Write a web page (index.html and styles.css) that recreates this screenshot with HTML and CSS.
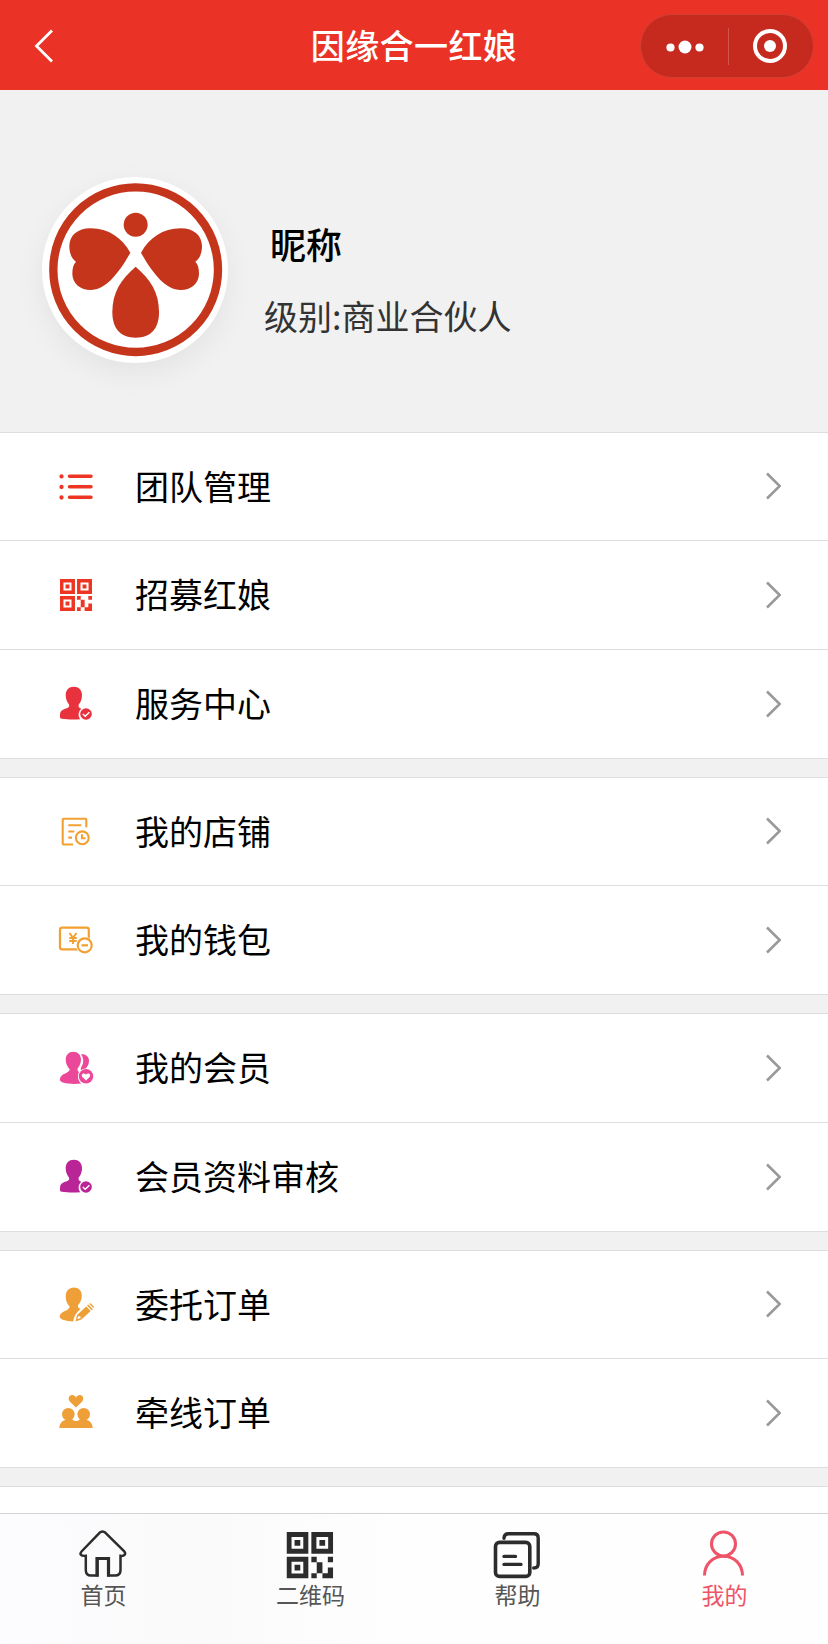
FILE: index.html
```html
<!DOCTYPE html>
<html lang="zh-CN">
<head>
    <meta charset="UTF-8">
    <meta name="viewport" content="width=device-width, initial-scale=1.0">
    <title>因缘合一红娘</title>
    <link rel="stylesheet" href="styles.css">
</head>
<body>
    <!-- shared icons -->
    <svg class="sprite" width="0" height="0">
        <symbol id="arrow" viewBox="0 0 16 28">
            <path d="M2 1.5 L14.7 14 L2 26.5" fill="none" stroke="#999" stroke-width="2.6"/>
        </symbol>
        <symbol id="qrcode" viewBox="0 0 139 139">
            <path fill="currentColor" fill-rule="evenodd" d="M0 0h65v65H0zM15 15v35h35V15zM24 24h17v17H24z
                M74 0h65v65H74zM89 15v35h35V15zM98 24h17v17H98z
                M0 74h65v65H0zM15 89v35h35V89zM24 98h17v17H24z"/>
            <path fill="currentColor" d="M74 74h16v16h-16zM123 74h16v16h-16zM90 90h17v33h-17zM123 106h16v33h-32v-16h16zM74 123h16v16h-16z"/>
        </symbol>
        <symbol id="user-check" viewBox="0 0 40 40">
            <path fill="currentColor" d="M17.8 2.7c5 0 8.2 3.3 8.2 8.3 0 4.2-1.3 7.2-3.3 9.500-.6 2.500.4 3.500 2.600 4.200-3.300 2.800-3.500 7.500-1 10.600-7 .4-14 .2-18.500-.6-1.900-.4-1.900-1-1.800-4 .2-3.300 1.500-4.500 4.500-5.600 4-1.400 5.200-1.900 4.500-4.600-2.100-2.500-3.300-5.500-3.300-9.500 0-5 3.200-8.300 8.100-8.300z"/>
            <circle cx="30" cy="30" r="5.8" fill="currentColor"/>
            <path d="M26.8 30l2.400 2.200 4.200-4" fill="none" stroke="#fff" stroke-width="1.5"/>
        </symbol>
    </svg>

    <header class="navbar">
        <svg class="back" viewBox="0 0 20 34"><path d="M19 1.5L3.5 17 19 32.500" fill="none" stroke="#fff" stroke-width="2.8"/></svg>
        <h1 class="navbar-title">因缘合一红娘</h1>
        <div class="capsule">
            <svg class="capsule-dots" viewBox="0 0 38 14">
                <circle cx="4.5" cy="7.5" r="4.1"/><circle cx="19" cy="7" r="6.5"/><circle cx="33.500" cy="7.5" r="4.1"/>
            </svg>
            <span class="capsule-line"></span>
            <svg class="capsule-close" viewBox="0 0 36 36">
                <circle cx="18" cy="18" r="15" fill="none" stroke="#fff" stroke-width="4"/><circle cx="18" cy="18" r="6"/>
            </svg>
        </div>
    </header>

    <section class="profile">
        <div class="avatar">
            <svg viewBox="0 0 558 558" fill="#c4351c">
                <circle cx="281" cy="278" r="247" fill="none" stroke="#c4351c" stroke-width="25"/>
                <circle cx="281" cy="143" r="36"/>
                <path id="petal" d="M265 227C240 183 200 154 146 154C106 154 82 176 82 208C82 230 90 246 102 254C94 262 91 274 91 290C91 320 116 339 146 339C190 339 230 290 265 227Z"/>
                <use href="#petal" transform="translate(562 0) scale(-1 1)"/>
                <path d="M281 269C238 306 211 345 211 405C211 455 235 482 281 482C327 482 351 455 351 405C351 345 324 306 281 269Z"/>
            </svg>
        </div>
        <div class="profile-info">
            <div class="nickname">昵称</div>
            <div class="level">级别:商业合伙人</div>
        </div>
    </section>

    <main class="menu">
        <div class="group">
            <a class="row">
                <svg class="icon red" viewBox="0 0 40 40" fill="none" stroke="currentColor" stroke-width="3.500" stroke-linecap="round">
                    <path d="M13.500 9.200H35M13.500 19.800H35M13.500 30.300H35"/>
                    <path stroke-width="4.300" d="M5.500 9.400h.01M5.500 20h.01M5.500 30.500h.01"/>
                </svg>
                <span class="label">团队管理</span>
                <svg class="arrow"><use href="#arrow"/></svg>
            </a>
            <a class="row">
                <svg class="icon red" viewBox="0 0 40 40"><use href="#qrcode" x="4" y="4" width="32" height="32"/></svg>
                <span class="label">招募红娘</span>
                <svg class="arrow"><use href="#arrow"/></svg>
            </a>
            <a class="row">
                <svg class="icon rose"><use href="#user-check"/></svg>
                <span class="label">服务中心</span>
                <svg class="arrow"><use href="#arrow"/></svg>
            </a>
        </div>

        <div class="group">
            <a class="row">
                <svg class="icon orange" viewBox="0 0 40 40" fill="none" stroke="currentColor" stroke-width="2.1">
                    <path d="M30.300 15.200V7.800Q30.300 6.800 29.300 6.800H7.700Q6.700 6.800 6.700 7.800V31.500Q6.700 32.500 7.700 32.500H17"/>
                    <path d="M12.300 13.200H25.300M12.300 19.500H18.300M12.300 25.600H16"/>
                    <circle cx="26.300" cy="25.800" r="6.400"/>
                    <path d="M26 22.300V26.300H29.500"/>
                </svg>
                <span class="label">我的店铺</span>
                <svg class="arrow"><use href="#arrow"/></svg>
            </a>
            <a class="row">
                <svg class="icon orange" viewBox="0 0 40 40" fill="none" stroke="currentColor" stroke-width="2.2">
                    <rect x="4" y="7.600" width="28.800" height="21.800" rx="2.200"/>
                    <path d="M13.500 13L17 17.800L20.500 13M13.300 18H20.700M13.300 21H20.700M17 17.800V24" stroke-width="1.900"/>
                    <circle cx="28.700" cy="25.300" r="8.600" fill="#fff" stroke="none"/>
                    <circle cx="28.700" cy="25.300" r="7"/>
                    <path d="M25.500 25.300H32"/>
                </svg>
                <span class="label">我的钱包</span>
                <svg class="arrow"><use href="#arrow"/></svg>
            </a>
        </div>

        <div class="group group-tall">
            <a class="row">
                <svg class="icon pink" viewBox="0 0 40 40" fill="currentColor">
                    <path d="M25 6.300c4.500-.4 8 2 8 6.500 0 3-1.200 5.700-3.300 7.600-2.200.2-3.500.8-4.700 1.800-.8-1.400.3-2.700 1.200-4.600 1.800-3.800 1.300-8-1.200-11.300z"/>
                    <path d="M17.300 3.700c4.500 0 7.700 3.300 7.700 7.800 0 3.500-1.300 6.500-3.300 8.800-.5 1.900 0 2.700 1.300 3.700-1.900 3.800-1.200 8.700 2.300 11.600-6 .8-13.300.6-18.300-1-4-1.300-3.900-4.200-1.400-6.800 2.800-2.600 7.900-3.200 8.100-6.500-2.300-2.300-4-5.700-4-9.800 0-4.500 3.100-7.800 7.600-7.800z"/>
                    <circle cx="30" cy="28.300" r="7.200"/>
                    <path fill="#fff" d="M30 32.600l-3.600-3.700c-1.900-2.200.9-4.900 3.600-2.500 2.700-2.400 5.500.3 3.600 2.500z"/>
                </svg>
                <span class="label">我的会员</span>
                <svg class="arrow"><use href="#arrow"/></svg>
            </a>
            <a class="row">
                <svg class="icon purple"><use href="#user-check"/></svg>
                <span class="label">会员资料审核</span>
                <svg class="arrow"><use href="#arrow"/></svg>
            </a>
        </div>

        <div class="group">
            <a class="row">
                <svg class="icon amber" viewBox="0 0 40 40" fill="currentColor">
                    <path d="M17.800 2.500c4.800 0 8 3.300 8 8.200 0 3.800-1.500 7-3.800 9.300-.5 2.100.5 3.200 2.500 4.100-4.600 4-6.500 7.200-7.200 12.300-3.700-.1-6.800-.5-9.500-1.300-4.600-1.300-5.200-4.100-2.700-6.600 2.800-2.500 8-3.200 8.600-6.900-2.500-2.500-4-6-4-10.400 0-5.200 3.300-8.700 8.100-8.700z"/>
                    <path fill-rule="evenodd" d="M19.600 36.400l1.400-6.400 9.200-8.600 4.500 4.700-9.300 8.500zM22.200 31l-.8 3 3-.7.300-1.600z"/>
                    <path d="M31 20.600l1.300-1.200 4.600 4.800-1.300 1.100zM33.200 18.700c.8-.7 1.400-.7 2.100 0l2.100 2.200c.6.700.6 1.400-.1 2.100z"/>
                </svg>
                <span class="label">委托订单</span>
                <svg class="arrow"><use href="#arrow"/></svg>
            </a>
            <a class="row">
                <svg class="icon amber" viewBox="0 0 40 40" fill="currentColor">
                    <path d="M20 14.400L14 8.800C11.500 6 12.900 2.200 16 2.100C17.900 2 19.200 3 20 4.400C20.800 3 22.100 2 24 2.100C27.100 2.200 28.500 6 26 8.800Z"/>
                    <circle cx="12.300" cy="21.300" r="6.300"/>
                    <circle cx="27.700" cy="21.300" r="6.300"/>
                    <path d="M3.300 35C3.500 30.500 6 28 9 27L16 26C17 27.500 18.500 28 20 28C21.500 28 23 27.500 24 26L31 27C34 28 36.500 30.500 36.700 35Z"/>
                </svg>
                <span class="label">牵线订单</span>
                <svg class="arrow"><use href="#arrow"/></svg>
            </a>
        </div>

        <div class="group">
            <a class="row"></a>
        </div>
    </main>

    <nav class="tabbar">
        <a class="tab">
            <svg class="tab-icon" viewBox="0 0 48 48" fill="none" stroke="currentColor" stroke-width="2.500">
                <path d="M20.500 2.800Q23.500 .2 26.500 2.800L45 21C47.500 24 45.500 26.300 41.500 25.800V40Q41.500 45.600 36 45.600H29.300V28.200H18.500V45.600H12Q6.800 45.600 6.800 40V25.800C1.500 26.300 .2 24 3 21Z"/>
                <path d="M18 46.500V28.500H29.500V46.500" stroke-width="3.200"/>
            </svg>
            <span>首页</span>
        </a>
        <a class="tab">
            <svg class="tab-icon" viewBox="0 0 48 48"><use href="#qrcode" x=".5" y="1.900" width="46.700" height="46.700"/></svg>
            <span>二维码</span>
        </a>
        <a class="tab">
            <svg class="tab-icon" viewBox="0 0 48 48" fill="none" stroke="currentColor" stroke-width="3.600" stroke-linecap="round">
                <rect x="2.500" y="12.400" width="34.300" height="34" rx="4"/>
                <path d="M11 8.200Q11.300 3.800 15.500 3.800H41Q45.200 3.800 45.200 8V34Q45.200 38 40.700 38M11 26.400H22.500M11 34.400H28" stroke-width="3.400"/>
            </svg>
            <span>帮助</span>
        </a>
        <a class="tab active">
            <svg class="tab-icon" viewBox="0 0 48 48" fill="none" stroke="currentColor" stroke-width="3">
                <circle cx="23.500" cy="13.900" r="12"/>
                <path d="M4.500 45.500C4.500 34 13 26.300 23.500 26.300C34 26.300 42.500 34 42.500 45.500"/>
            </svg>
            <span>我的</span>
        </a>
    </nav>
</body>
</html>
```

FILE: styles.css
```css
* {
    box-sizing: border-box;
}

body {
    margin: 0;
    height: 1644px;
    overflow: hidden;
    display: flex;
    flex-direction: column;
    background: #f1f1f1;
    font-family: "Noto Sans CJK SC", sans-serif;
    color: #000;
}

.sprite {
    position: absolute;
}

/* top bar */
.navbar {
    flex: none;
    height: 90px;
    padding: 0 14px 0 33px;
    display: grid;
    grid-template-columns: 1fr auto 1fr;
    align-items: center;
    background: #ea3326;
}

.back {
    width: 20px;
    height: 34px;
    margin-top: 2px;
}

.navbar-title {
    margin: 0 19px 0 0;
    font-size: 34px;
    font-weight: 500;
    letter-spacing: 0.4px;
    line-height: 50px;
    color: #fff;
}

.capsule {
    justify-self: end;
    width: 174px;
    height: 64px;
    margin-top: 2px;
    padding: 0 25px;
    display: flex;
    align-items: center;
    justify-content: space-between;
    border: 1px solid #cf4034;
    border-radius: 32px;
    background: #c6291d;
    fill: #fff;
}

.capsule-dots {
    width: 38px;
    height: 14px;
    margin-top: 1px;
}

.capsule-line {
    width: 1px;
    height: 37px;
    background: #d3564c;
}

.capsule-close {
    width: 36px;
    height: 36px;
}

/* profile */
.profile {
    flex: none;
    height: 342px;
    padding: 87px 42px 0;
    display: flex;
    gap: 36px;
}

.avatar {
    width: 186px;
    height: 186px;
    border-radius: 50%;
    background: #fff;
    box-shadow: 0 10px 30px rgba(0, 0, 0, 0.06);
}

.avatar svg {
    display: block;
}

.profile-info {
    padding-top: 40px;
}

.nickname {
    padding-left: 6px;
    font-size: 36px;
    font-weight: 500;
    line-height: 52px;
}

.level {
    margin-top: 22px;
    font-size: 34px;
    line-height: 50px;
    color: #333;
}

/* menu */
.menu {
    flex: 1;
    min-height: 0;
    overflow: hidden;
}

.group {
    margin-bottom: 18px;
    border-bottom: 1px solid #dedede;
    background: #fff;
}

.row {
    height: 109px;
    padding: 0 47px 0 56px;
    display: flex;
    align-items: center;
    border-top: 1px solid #dedede;
}

.row:first-child {
    height: 108px;
}

.group-tall .row:first-child {
    height: 109px;
}

.icon {
    width: 40px;
    height: 40px;
}

.label {
    flex: 1;
    margin-left: 39px;
    padding-bottom: 2px;
    font-size: 34px;
    line-height: 50px;
}

.arrow {
    width: 16px;
    height: 28px;
    margin-bottom: 1px;
}

.red {
    color: #ee3524;
}

.rose {
    color: #e8323e;
}

.orange {
    color: #f3a032;
}

.pink {
    color: #ec4899;
}

.purple {
    color: #b92596;
}

.amber {
    color: #ee9f38;
}

/* bottom tabs */
.tabbar {
    flex: none;
    height: 131px;
    padding-top: 16px;
    display: grid;
    grid-template-columns: repeat(4, 1fr);
    border-top: 1px solid #d2d2d4;
    background: linear-gradient(90deg, #fcfcfe 0, #fafafb 200px, #fefefe 400px);
}

.tab {
    display: flex;
    flex-direction: column;
    align-items: center;
    font-size: 23px;
    line-height: 32px;
    color: #555;
}

.tab-icon {
    width: 48px;
    height: 48px;
    margin-right: 1px;
    overflow: visible;
    color: #2c2c2c;
}

.active,
.active .tab-icon {
    color: #ee5467;
}
```
